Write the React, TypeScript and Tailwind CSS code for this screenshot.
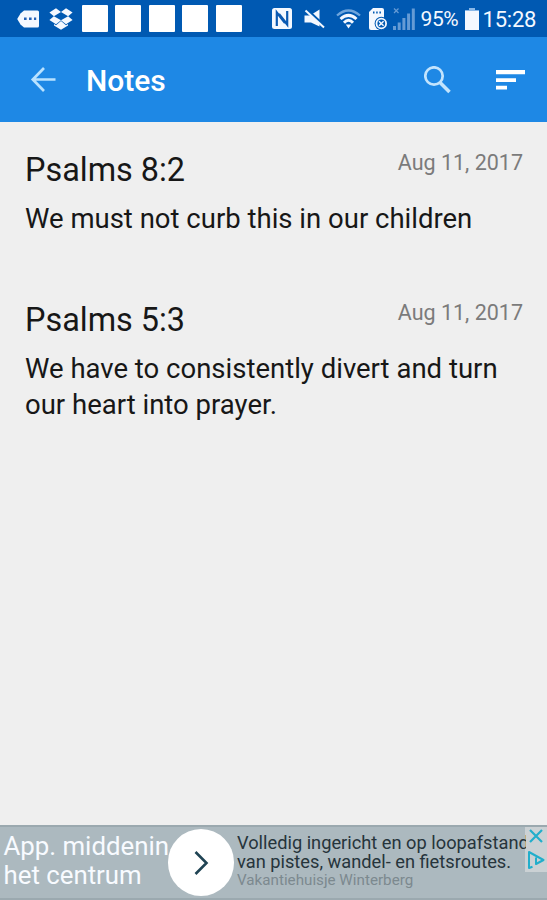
import type { ReactNode } from "react";

const notes = [
  { title: "Psalms 8:2", date: "Aug 11, 2017", lines: ["We must not curb this in our children"] },
  {
    title: "Psalms 5:3",
    date: "Aug 11, 2017",
    lines: ["We have to consistently divert and turn", "our heart into prayer."],
  },
];

function StatusIcon({ className, viewBox, children }: { className: string; viewBox: string; children: ReactNode }) {
  return (
    <svg className={`shrink-0 ${className}`} viewBox={viewBox} fill="currentColor">
      {children}
    </svg>
  );
}

function StatusBar() {
  return (
    <div className="flex h-[37px] items-center bg-[#0059b2] pl-[17px] text-[#f4f8ff]">
      <StatusIcon className="h-[18px] w-[22px]" viewBox="0 0 22 18">
        <path d="M7 0.5h13.5a1.5 1.5 0 0 1 1.5 1.5v14a1.5 1.5 0 0 1-1.5 1.5H7L3.5 14.5 0.5 9.5v-1L3.5 3.5Z" />
        <path d="M7 7.5h2.6v2.6H7zM12 7.5h2.6v2.6H12zM17 7.5h2.2v2.6H17z" fill="#2460b5" />
      </StatusIcon>
      <StatusIcon className="ml-[10px] h-[22px] w-[24px]" viewBox="0 0 24 22">
        <path d="M7 0.3 0.4 4.6 4.9 8.2 12 4ZM17 0.3l6.6 4.3-4.5 3.6L12 4ZM0.4 12l6.6 4.2 5-4-7.1-4ZM23.6 12 17 16.2l-5-4 7.1-4ZM12 13.1l-5 4.1-2-1.2v1.5l7 4.2 7-4.2V16l-2 1.2Z" />
      </StatusIcon>
      <div className="ml-[8.5px] flex gap-[7.5px]">
        {[0, 1, 2, 3, 4].map((n) => (
          <div key={n} className="h-[27px] w-[26px] rounded-[1px] bg-white" />
        ))}
      </div>
      <StatusIcon className="ml-[30px] h-[21px] w-[20px]" viewBox="0 0 20 21">
        <rect width="20" height="21" rx="2.5" />
        <path d="M4.8 18V4.5L13 15M15.2 3v13.5L7 6" fill="none" stroke="#0a59b2" strokeWidth="2.2" />
      </StatusIcon>
      <StatusIcon className="ml-[12px] h-[20px] w-[22px]" viewBox="0 0 22 20">
        <path d="M0.5 6.5H6L15.5 0.5v17L7 13.5H0.5Z" />
        <path d="M2 0 22 18.5" stroke="#0059b2" strokeWidth="3" />
        <path d="M1.5 1.5 20 18.5" stroke="currentColor" strokeWidth="2" />
      </StatusIcon>
      <StatusIcon className="ml-[10px] h-[20px] w-[25px]" viewBox="0 0 25 20">
        <path d="M1 6.5Q12.5-3.5 24 6.5" fill="none" stroke="#6ea5dc" strokeWidth="2.3" />
        <path d="M4.5 10Q12.5 2.8 20.5 10" fill="none" stroke="currentColor" strokeWidth="3" />
        <path d="M8 13.7Q12.5 9 17 13.7" fill="none" stroke="currentColor" strokeWidth="3" />
        <path d="M9.8 15.5h5.4l-2.7 4Z" />
      </StatusIcon>
      <StatusIcon className="ml-[8.5px] h-[22px] w-[19px]" viewBox="0 0 19 22">
        <path d="M4 0h9a2 2 0 0 1 2 2v18a2 2 0 0 1-2 2H2a2 2 0 0 1-2-2V4Z" />
        <path d="M4 3.5h1.5v2H4zM7.2 3.5h1.5v2H7.2zM10.4 3.5h1.5v2h-1.5z" fill="#0059b2" />
        <circle cx="12.3" cy="15.5" r="6.7" fill="#0059b2" />
        <circle cx="12.3" cy="15.5" r="4.8" fill="none" stroke="currentColor" strokeWidth="1.8" />
        <path d="m10 13.2 4.6 4.6m0-4.6L10 17.8" stroke="currentColor" strokeWidth="1.5" />
      </StatusIcon>
      <StatusIcon className="ml-[5px] h-[22px] w-[22px] text-[#659bd5]" viewBox="0 0 22 22">
        <path d="M0 18h3v4H0zM4.7 14.5h3V22h-3zM9.4 10h3v12h-3zM14.1 5.5h3V22h-3zM18.8 0.5h3V22h-3z" />
        <path d="m1 0.5 4.5 4.5m0-4.5L1 5" stroke="currentColor" strokeWidth="1.2" />
      </StatusIcon>
      <span className="mt-[2px] ml-[5.5px] w-[38px] whitespace-nowrap text-[21px] leading-none tracking-[-0.4px]">95%</span>
      <StatusIcon className="ml-[6px] h-[22px] w-[14px]" viewBox="0 0 14 22">
        <path d="M4 0h6v2h4v20H0V2h4Z" />
        <path d="M0 2h4V0h6v2h4v1H0Z" fill="#8ab8e8" />
      </StatusIcon>
      <span className="mt-[2px] ml-[4px] whitespace-nowrap text-[22px] leading-none tracking-[-0.2px]">15:28</span>
    </div>
  );
}

function AppBar() {
  return (
    <header className="flex h-[85px] items-center bg-[#1e88e5] pr-[22px] pl-[30px]">
      <svg className="h-[25px] w-[26px] text-[#b9e2ff]" viewBox="0 0 26 25" fill="none" stroke="currentColor" strokeWidth="2.7">
        <path d="M25.5 12.5H3M14 1 2.8 12.5 14 24" />
      </svg>
      <h1 className="mt-[2px] ml-[30px] flex-1 text-[30px] leading-none font-medium text-white">Notes</h1>
      <svg className="mr-[44px] h-[28px] w-[28px] text-[#c3e4fd]" viewBox="0 0 28 28" fill="none" stroke="currentColor">
        <circle cx="10" cy="10" r="8.7" strokeWidth="2.7" />
        <path d="m16 16.5 9.5 9.5" strokeWidth="3.5" />
      </svg>
      <svg className="h-[20px] w-[29px] text-white" viewBox="0 0 29 20" fill="currentColor">
        <path d="M0 0h29v4.2H0zM0 8.2h20v3.7H0zM0 15.7h11v3.7H0z" />
      </svg>
    </header>
  );
}

function AdBanner() {
  return (
    <aside className="relative flex h-[75px] items-center overflow-hidden border-t-2 border-b-2 border-[#9ba9af] bg-[#acb9bf]">
      <p className="mb-[3px] w-[168px] shrink-0 pl-[3.5px] text-[25.8px] leading-[29px] whitespace-nowrap text-[#f8fbff]">
        App. middenin
        <br />
        het centrum
      </p>
      <div className="flex h-[67px] w-[66px] shrink-0 items-center justify-center rounded-full bg-white">
        <svg className="h-[24px] w-[15px]" viewBox="0 0 15 24" fill="none" stroke="#204454" strokeWidth="2.6">
          <path d="m1.5 1 11 11-11 11" />
        </svg>
      </div>
      <div className="z-10 mb-[4px] w-[292px] overflow-hidden pl-[3px] whitespace-nowrap">
        <p className="text-[18.25px] leading-[19.5px] text-[#26343b]">
          Volledig ingericht en op loopafstand
          <br />
          van pistes, wandel- en fietsroutes.
        </p>
        <p className="text-[15.2px] leading-[17px] text-[#7c898f]">Vakantiehuisje Winterberg</p>
      </div>
      {/* ad controls */}
      <div className="absolute top-[-2px] right-0 flex h-[47px] w-[22px] flex-col bg-[#cbd1d4]">
        <svg className="h-[23px] w-[22px]" viewBox="0 0 22 23" fill="none" stroke="#22aecb" strokeWidth="2.2">
          <path d="m5 5 12 12m0-12-12 12" />
        </svg>
        <svg className="h-[24px] w-[22px]" viewBox="0 0 22 24" fill="none" stroke="#22aecb" strokeWidth="2">
          <path d="M7.5 18.8 4 20V4l14.5 8-7.5 4V9.5" strokeLinejoin="round" />
        </svg>
      </div>
    </aside>
  );
}

export default function App() {
  return (
    <div className="flex h-[900px] w-full flex-col overflow-hidden bg-[#efefef] font-[Roboto,'Liberation_Sans',sans-serif]">
      <StatusBar />
      <AppBar />
      <main className="flex-1 pt-[28px] pr-[24px] pl-[25px]">
        {notes.map((note) => (
          <article key={note.title} className="mb-[63px]">
            <div className="flex justify-between">
              <h2 className="text-[32.4px] leading-[40px] text-[#171717]">{note.title}</h2>
              <time className="text-[21.5px] leading-[25px] text-[#7b7b7b]">{note.date}</time>
            </div>
            <p className="mt-[11px] text-[27.5px] leading-[36px] whitespace-nowrap text-[#171717]">
              {note.lines.map((line) => (
                <span key={line} className="block">
                  {line}
                </span>
              ))}
            </p>
          </article>
        ))}
      </main>
      <AdBanner />
    </div>
  );
}
